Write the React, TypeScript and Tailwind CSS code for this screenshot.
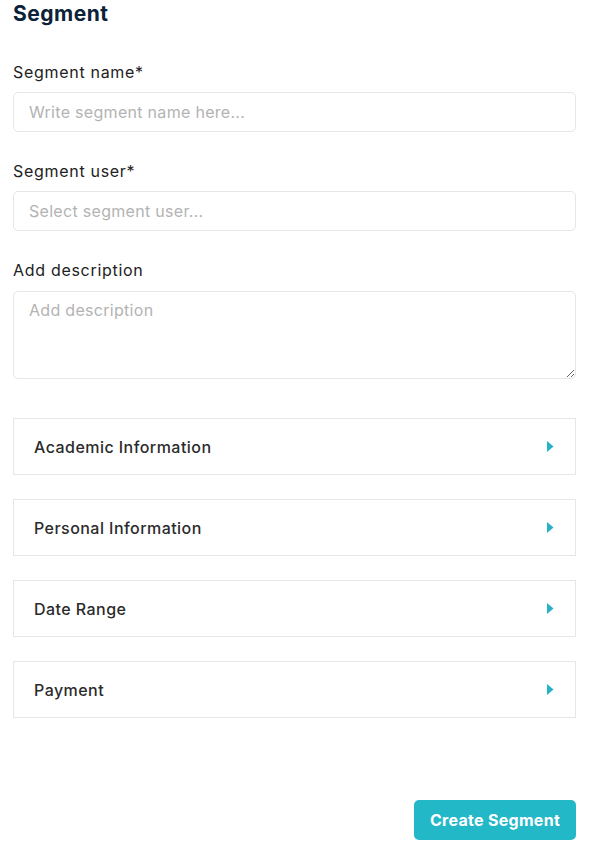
import React from 'react';

const sections = ['Academic Information', 'Personal Information', 'Date Range', 'Payment'];

const inputClass =
  'block w-full h-[40px] px-[15px] bg-white border border-[#e6e6e6] rounded-[5px] text-[16px] tracking-[0.3px] text-[#222] placeholder:text-[#b3b3b3] focus:outline-none';

const labelClass = 'block text-[16px] leading-[22px] tracking-[0.7px] text-[#222]';

const App: React.FC = () => {
  return (
    <div className="min-h-screen bg-white pl-[13px] pr-[14px] pt-[2px] pb-[6px]" style={{ fontFamily: 'Inter, "Open Sans", sans-serif' }}>
      <h1 className="text-[21px] leading-[24px] font-bold tracking-[0.5px] text-[#0b2238]">Segment</h1>

      <label className={`mt-[35px] ${labelClass}`}>Segment name*</label>
      <input type="text" placeholder="Write segment name here..." className={`mt-[9px] ${inputClass}`} />

      <label className={`mt-[28px] ${labelClass}`}>Segment user*</label>
      <input type="text" placeholder="Select segment user..." className={`mt-[9px] ${inputClass}`} />

      <label className={`mt-[28px] ${labelClass}`}>Add description</label>
      <textarea
        placeholder="Add description"
        className="mt-[10px] block w-full h-[88px] px-[15px] py-[7px] bg-white border border-[#e6e6e6] rounded-[5px] text-[16px] leading-[22px] tracking-[0.3px] text-[#222] placeholder:text-[#b3b3b3] focus:outline-none"
      />

      <div className="mt-[39px] flex flex-col gap-[24px]">
        {sections.map(name => (
          <button
            key={name}
            className="flex items-center justify-between h-[57px] w-full pl-[20px] pr-[20px] bg-white border border-[#e6e6e6] text-left"
          >
            <span className="text-[16px] font-medium tracking-[0.45px] text-[#2b2b2b]">{name}</span>
            <svg width="7" height="11" viewBox="0 0 7 11" className="mr-[1px]">
              <path d="M0 0 L6.5 5.5 L0 11 Z" fill="#27b3c3" />
            </svg>
          </button>
        ))}
      </div>

      <div className="mt-[82px] flex justify-end">
        <button className="h-[40px] w-[162px] rounded-[5px] bg-[#22b8c8] text-white text-[16px] font-bold tracking-[0.3px]">
          Create Segment
        </button>
      </div>
    </div>
  );
};

export default App;
